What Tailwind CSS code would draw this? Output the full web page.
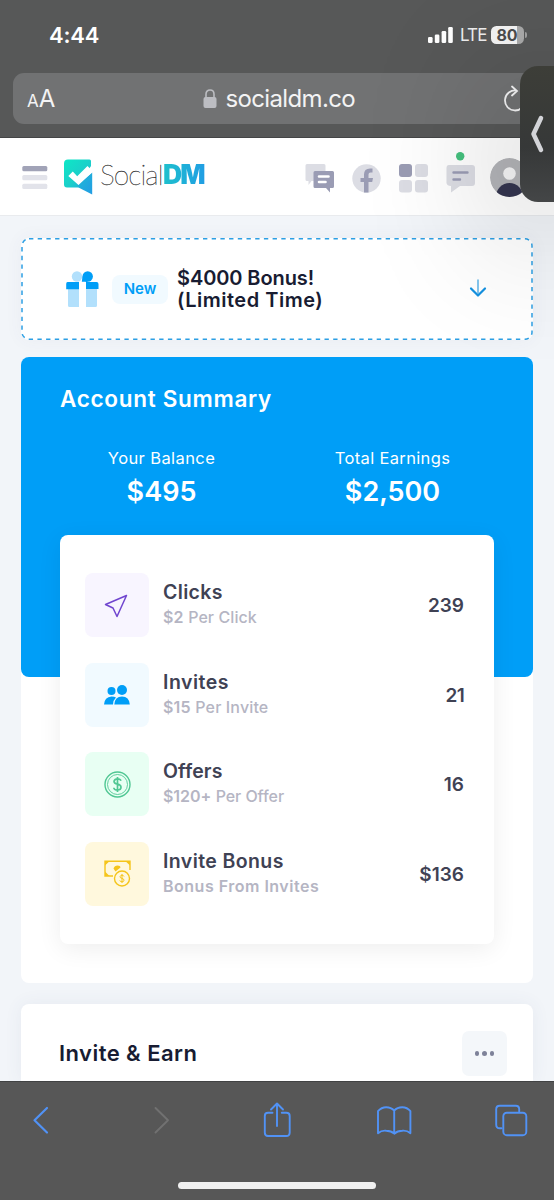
<!DOCTYPE html>
<html lang="en">
<head>
<meta charset="utf-8">
<title>SocialDM</title>
<script src="https://cdn.jsdelivr.net/npm/@tailwindcss/browser@4"></script>
</head>
<body class="relative h-[1200px] w-[554px] overflow-hidden bg-[#f2f5f9] font-['Inter',sans-serif] text-[#3f4254]">
<div class="flex h-[1200px] flex-col">

  <!-- Status bar and address bar -->
  <div class="h-[138px] shrink-0 border-b border-[#444546] bg-[#575858]">
    <div class="flex h-[73px] items-center justify-between pb-[3px] pl-[49px] pr-[27px]">
      <span class="text-[22px] font-semibold leading-none tracking-[-0.200px] text-white">4:44</span>
      <div class="flex items-center text-white">
        <svg class="block h-4 w-[25px]" viewBox="0 0 25 16" fill="currentColor"><rect x="0" y="10" width="4.600" height="6" rx="1.300"/><rect x="6.800" y="7.400" width="4.600" height="8.600" rx="1.300"/><rect x="13.600" y="4" width="4.600" height="12" rx="1.300"/><rect x="20.200" y="0" width="4.600" height="16" rx="1.300"/></svg>
        <span class="ml-[7px] w-[26px] text-[17px] leading-none tracking-[-0.900px] text-[#eeeeee]">LTE</span>
        <div class="ml-[5px] flex h-[18px] w-[33px] items-center justify-center rounded-[5.500px] bg-[linear-gradient(90deg,#f4f4f4_80%,#a9a9a9_80%)] pr-px text-[16px] font-bold leading-none text-[#4c4d4e]">80</div>
        <div class="ml-[1px] h-[6px] w-[2px] rounded-r-full bg-[#a0a0a0]"></div>
      </div>
    </div>
    <div class="ml-[13px] flex h-[51px] items-center rounded-l-[11px] bg-[#717273] text-[#f3f3f4]">
      <div class="flex w-[188px] shrink-0 items-baseline pl-[14px] leading-none"><span class="text-[17px]">A</span><span class="text-[24px]">A</span></div>
      <svg class="ml-[1.500px] mb-px h-[19px] w-[14px] shrink-0" viewBox="0 0 14 19"><rect x="0.500" y="8" width="13" height="11" rx="2" fill="#bcbdc2"/><path d="M3 9V5.200C3 2.700 4.600 1 7 1s4 1.700 4 4.200V9" fill="none" stroke="#bcbdc2" stroke-width="1.600"/></svg>
      <span class="ml-[9px] text-[24px] leading-none tracking-[-0.640px]">socialdm.co</span>
      <svg class="ml-auto mr-[26px] h-[28px] w-[26px]" viewBox="0 0 26 28" fill="none" stroke="#f3f3f4" stroke-width="1.800" stroke-linecap="round"><path d="M14.500 5.600A10 10 0 1 0 23 15.500M10 1.500l5 4.500-5 4.500"/></svg>
    </div>
  </div>

  <!-- Site header -->
  <header class="flex h-[78px] shrink-0 items-center border-b border-[#e9ebee] bg-white">
    <svg class="ml-[22px] h-6 w-[26px] shrink-0" viewBox="0 0 26 24"><rect x="0.300" y="1" width="25" height="5.200" rx="1.500" fill="#a1a3b7"/><rect x="0.300" y="10" width="25" height="5.200" rx="1.500" fill="#e2e3ea"/><rect x="0.300" y="18.700" width="25" height="5.200" rx="1.500" fill="#e2e3ea"/></svg>
    <svg class="ml-4 h-9 w-[29px] shrink-0" viewBox="0 0 29 36"><defs><linearGradient id="teal" x1="0" y1="0" x2="1" y2="1"><stop offset="0" stop-color="#0de8c6"/><stop offset=".55" stop-color="#1bcfca"/><stop offset="1" stop-color="#20a8df"/></linearGradient><linearGradient id="blue" x1="0" y1="0" x2="1" y2="1"><stop offset="0" stop-color="#20bcd4"/><stop offset="1" stop-color="#229ce4"/></linearGradient></defs><path d="M4 .5h21.500q1.500 0 1.500 1.500v5L14 26.500l2 2H3q-3 0-3-3v-21Q0 .5 4 .5Z" fill="url(#teal)"/><path d="M28.200 13.500v22L15 28.800l-2-2.600Z" fill="url(#blue)"/><path d="m4.300 17 4.500-4.400 4.400 4.600L23.500 7 28 11.500v2L14.500 26Z" fill="#fff"/></svg>
    <div class="ml-[7px] flex -translate-y-[3px] items-center leading-8"><span class="w-[63px] font-['Lato',sans-serif] text-[28px] font-thin tracking-[-0.900px] text-[#333] [-webkit-text-stroke:0.300px_#333]">Social</span><span class="bg-gradient-to-r from-[#1fc0cc] to-[#229be5] bg-clip-text pr-1 text-[26.500px] font-black tracking-[-2px] text-transparent">DM</span></div>
    <svg class="absolute left-[305px] top-[150px] h-[50px] w-[220px]" viewBox="305 150 220 50">
      <g fill="#dcdde4"><path d="M307 164h17q1.500 0 1.500 1.500V181h-14l-3 4v-4h-1.500q-1.500 0-1.500-1.500v-14q0-1.500 1.500-1.500Z"/><circle cx="366.500" cy="178.500" r="14.200"/><rect x="415" y="164" width="13" height="13" rx="3"/><rect x="399" y="180" width="13" height="12.500" rx="3"/><rect x="415" y="180" width="13" height="12.500" rx="3"/><path d="M449 165h23q3 0 3 3v15q0 3-3 3h-12l-9 6.500V186q-4 0-4.500-3v-15q0-3 2.500-3Z"/></g>
      <path d="M315 171h17.500q1.500 0 1.500 1.500v14q0 1.500-1.500 1.500h-2.500v4.500l-4-4.500h-11q-1.500 0-1.500-1.500v-14q0-1.500 1.500-1.500Z" fill="#9a9cb4"/><path d="M319 176.500h9.500M319 182h6.500" stroke="#fff" stroke-width="2.600" stroke-linecap="round"/>
      <path d="M364 192.500V182h-3.500v-4h3.500v-3.500q0-6 6-6h2.500v4h-2q-2 0-2 2v3.500h4.500l-.8 4h-3.700v10.500Z" fill="#9a9cb4"/>
      <rect x="399" y="164" width="13" height="13" rx="3" fill="#9a9cb4"/>
      <path d="M453.500 172.500h14M453.500 179.500h6.500" stroke="#9a9cb4" stroke-width="2.400" stroke-linecap="round"/><circle cx="460.200" cy="156.300" r="4.200" fill="#45c17e"/>
      <clipPath id="avatar"><circle cx="509.500" cy="177.500" r="19.500"/></clipPath><g clip-path="url(#avatar)"><circle cx="509.500" cy="177.500" r="19.500" fill="#b4b5b9"/><circle cx="509.500" cy="173.500" r="6.300" fill="#f7f7f8"/><circle cx="509.500" cy="196.500" r="13.500" fill="#353650"/></g>
    </svg>
  </header>

  <main class="flex min-h-0 flex-1 flex-col px-[21px] pt-[22px]">
    <!-- Bonus banner -->
    <section class="relative flex h-[102px] w-[512px] shrink-0 items-center rounded-[8px] bg-white shadow-[0_0_18px_rgba(76,87,125,0.05)]">
      <svg class="absolute inset-0 h-[102px] w-[512px]" viewBox="0 0 512 102"><rect x="1" y=".8" width="510" height="100.400" rx="7" fill="none" stroke="#2c9fe4" stroke-width="1.500" stroke-dasharray="4.350 4.350"/></svg>
      <svg class="ml-[45px] h-9 w-[33px]" viewBox="0 0 33 36"><circle cx="11" cy="5.500" r="5.200" fill="#b2e0fc"/><path d="M2 18h11v18H3.500Q2 36 2 34.500ZM20 18h11v16.500q0 1.500-1.500 1.500H20Z" fill="#b2e0fc"/><circle cx="21.700" cy="5.500" r="5.200" fill="#009ef7"/><path d="M16.500 5.500 22 11h8.500q2 0 2 2v5h-12.500v-7.200h-4.200Zm-15 5.500H13v7.200H.200V13q0-2 1.300-2Z" fill="#009ef7"/></svg>
      <div class="ml-[13px] flex h-[29px] w-14 items-center justify-center rounded-[8px] bg-[#f1faff] text-[15px] font-semibold text-[#009ef7]">New</div>
      <div class="ml-[9px] whitespace-nowrap text-[20px] font-semibold leading-[22.500px] text-[#181c32]"><div class="tracking-[-0.100px]">$4000 Bonus!</div><div class="tracking-[0.500px]">(Limited Time)</div></div>
      <svg class="absolute left-[448px] top-[41px] h-[19px] w-[18px]" viewBox="0 0 18 19" fill="none" stroke="#1491e0" stroke-linecap="round" stroke-linejoin="round"><path d="M9 1v13" stroke="#71bdea" stroke-width="1.700"/><path d="m2 9.500 7 7 7-7" stroke-width="2.200"/></svg>
    </section>

    <!-- Account summary -->
    <section class="relative mt-[17px] h-[626px] w-[512px] shrink-0 rounded-[8px] bg-white">
      <div class="h-[320px] rounded-[8px] bg-[#009ef7] pt-[29px] text-white">
        <h2 class="ml-[39px] text-[22.500px] font-semibold leading-[26px] tracking-[0.700px]">Account Summary</h2>
        <div class="mt-[34px] flex px-[25px] text-center">
          <div class="w-[231px]"><div class="text-[16.500px] leading-6 tracking-[0.400px]">Your Balance</div><div class="mt-[4px] text-[27px] font-semibold leading-[36px]">$495</div></div>
          <div class="w-[231px]"><div class="text-[16.500px] leading-6 tracking-[0.350px]">Total Earnings</div><div class="mt-[4px] text-[27px] font-semibold leading-[36px]">$2,500</div></div>
        </div>
      </div>
      <div class="relative ml-[39px] mr-[39px] -mt-[142px] flex h-[409px] flex-col gap-[25.500px] rounded-[8px] bg-white pl-[25px] pr-[30px] pt-[38px] shadow-[0_5px_24px_rgba(0,0,0,0.070)]">
        <div class="flex h-16 items-center">
          <div class="flex size-16 items-center justify-center rounded-[8px] bg-[#f8f5ff]"><svg class="h-6 w-6 translate-x-[-1px] translate-y-[1px]" viewBox="0 0 24 24" fill="none" stroke="#7045cf" stroke-width="1.500" stroke-linejoin="round"><path d="M22.500 1.500 1.500 10.500l7.500 3.500 4 8.500Z"/></svg></div>
          <div class="ml-[14px] -mt-[2px]"><div class="text-[19.500px] font-semibold leading-[26px] tracking-[0.350px]">Clicks</div><div class="text-[16px] leading-6 tracking-[0.080px] text-[#b5b5c3]"><span class="font-semibold">$2</span> <span class="font-medium">Per Click</span></div></div>
          <div class="ml-auto mt-[3px] text-[19px] font-semibold">239</div>
        </div>
        <div class="flex h-16 items-center">
          <div class="flex size-16 items-center justify-center rounded-[8px] bg-[#f1faff]"><svg class="h-[20px] w-[26px]" viewBox="0 0 26 20" fill="#009ef7"><circle cx="7.500" cy="6" r="4"/><circle cx="18" cy="5" r="5"/><path d="M0 19.500q.5-7.500 7.500-8 3 0 4.500 1-2.800 2.500-3 7ZM10.300 19.500q.5-8 7.700-8t7.800 8Z"/></svg></div>
          <div class="ml-[14px] -mt-[2px]"><div class="text-[19.500px] font-semibold leading-[26px] tracking-[0.500px]">Invites</div><div class="text-[16px] leading-6 tracking-[0.140px] text-[#b5b5c3]"><span class="font-semibold">$15</span> <span class="font-medium">Per Invite</span></div></div>
          <div class="ml-auto mt-[3px] text-[19px] font-semibold tracking-[-0.700px]">21</div>
        </div>
        <div class="flex h-16 items-center">
          <div class="flex size-16 items-center justify-center rounded-[8px] bg-[#e8fff3]"><svg class="h-[27px] w-[27px]" viewBox="0 0 27 27" fill="none" stroke="#50c793"><circle cx="13.500" cy="13.500" r="12.500" stroke-width="1.400"/><circle cx="13.500" cy="13.500" r="10" stroke-width=".9"/><path d="M17 9.800q-.7-2-3.500-2t-3.500 2.500q0 2.200 3.500 2.900t3.500 3.100q0 2.700-3.500 2.700t-3.700-2.300M13.500 6v15" stroke-width="1.700"/></svg></div>
          <div class="ml-[14px] -mt-[2px]"><div class="text-[19.500px] font-semibold leading-[26px] tracking-[0.100px]">Offers</div><div class="text-[16px] leading-6 tracking-[-0.060px] text-[#b5b5c3]"><span class="font-semibold">$120+</span> <span class="font-medium">Per Offer</span></div></div>
          <div class="ml-auto mt-[3px] text-[19px] font-semibold">16</div>
        </div>
        <div class="flex h-16 items-center">
          <div class="flex size-16 items-center justify-center rounded-[8px] bg-[#fff8dd]"><svg class="h-[27px] w-[27px]" viewBox="0 0 27 27" fill="none" stroke="#f5c51b"><path d="M9 16H1V1.200h25V10" stroke-width="1.400"/><path d="M1 1.200h4.500L1 5.500ZM26 1.200h-4.500l4.500 4.300ZM1 16v-4.500L5.500 16ZM9.500 8.500q1-3 4-3t3 2l-5 4Z" fill="#f5c51b" stroke="none"/><circle cx="18" cy="18.500" r="7.500" stroke-width="1.400"/><path d="M20 16.500q-.5-1.300-2-1.300t-2 1.500q0 1.300 2 1.700t2 1.800q0 1.600-2 1.600t-2.200-1.400M18 14v9" stroke-width="1"/></svg></div>
          <div class="ml-[14px] -mt-[2px]"><div class="text-[19.500px] font-semibold leading-[26px] tracking-[0.400px]">Invite Bonus</div><div class="text-[16px] font-semibold leading-6 tracking-[0.500px] text-[#b5b5c3]">Bonus From Invites</div></div>
          <div class="ml-auto mt-[3px] text-[19px] font-semibold">$136</div>
        </div>
      </div>
    </section>

    <!-- Invite panel -->
    <section class="mt-[21px] flex h-[77px] w-[512px] shrink-0 items-start justify-between rounded-t-[8px] bg-white pl-[38px] pr-[26px] pt-[27px] shadow-[0_0_18px_rgba(76,87,125,0.070)]">
      <h2 class="pt-[8px] text-[22px] font-semibold leading-[28px] tracking-[0.450px] text-[#181c32]">Invite &amp; Earn</h2>
      <div class="flex h-[45px] w-[45px] items-center justify-center gap-[3px] rounded-[7px] bg-[#f4f7fa]"><i class="size-[4.500px] rounded-full bg-[#7e8299]"></i><i class="size-[4.500px] rounded-full bg-[#7e8299]"></i><i class="size-[4.500px] rounded-full bg-[#7e8299]"></i></div>
    </section>
  </main>

  <!-- Browser toolbar -->
  <nav class="relative z-20 flex h-[119px] shrink-0 flex-col items-center border-t border-[#414243] bg-[#575757]">
    <svg class="h-[103px] w-[554px] shrink-0" viewBox="0 1082 554 103" fill="none" stroke="#5192f5" stroke-width="1.900" stroke-linecap="round" stroke-linejoin="round">
      <path d="m47 1108-12.500 12.300L47 1132.500" stroke-width="2.200"/><path d="m155.500 1108 12.500 12.300-12.500 12.200" stroke="#717171"/>
      <path d="M272.500 1112.800H268q-3.200 0-3.200 3.200v16.500q0 3.500 3.200 3.500h18.300q3.400 0 3.400-3.500V1116q0-3.200-3.400-3.200h-4.500M277 1126v-22M271 1109.500l6-6 6 6"/>
      <path d="M394.200 1110.500q-3.200-3.300-8-3.300t-8.200 4v22q3.500-3 8.200-2.500 5 0 8 3 3.300-3 8-3 4.800-.500 8.200 2.500v-22q-3.200-4-8.200-4t-8 3.300Zm0 0v23"/>
      <path d="M501.500 1128.200h-1.800q-3.500 0-3.500-3.500v-15.500q0-3.500 3.500-3.500h16q3.500 0 3.500 3.500v2.300"/><rect x="503.300" y="1112.700" width="23" height="22.500" rx="3.500"/>
    </svg>
    <div class="-mt-[3px] h-[7px] w-[198px] shrink-0 rounded-full bg-[#f0f0f0]"></div>
  </nav>
</div>

<!-- Floating side tab -->
<div class="absolute left-[520px] top-[66px] z-30 flex h-[136px] w-[50px] items-center rounded-[18px] bg-[linear-gradient(180deg,#3d3e38,#363838_60%,#444647)] pl-[9px] shadow-[0_25px_140px_15px_rgba(0,0,0,0.240)]">
  <svg class="h-[38px] w-4" viewBox="0 0 16 38" fill="none" stroke="#d3d4d8" stroke-width="4.500" stroke-linecap="round" stroke-linejoin="round"><path d="M12 3 4.500 19 12 35"/></svg>
</div>
</body>
</html>
